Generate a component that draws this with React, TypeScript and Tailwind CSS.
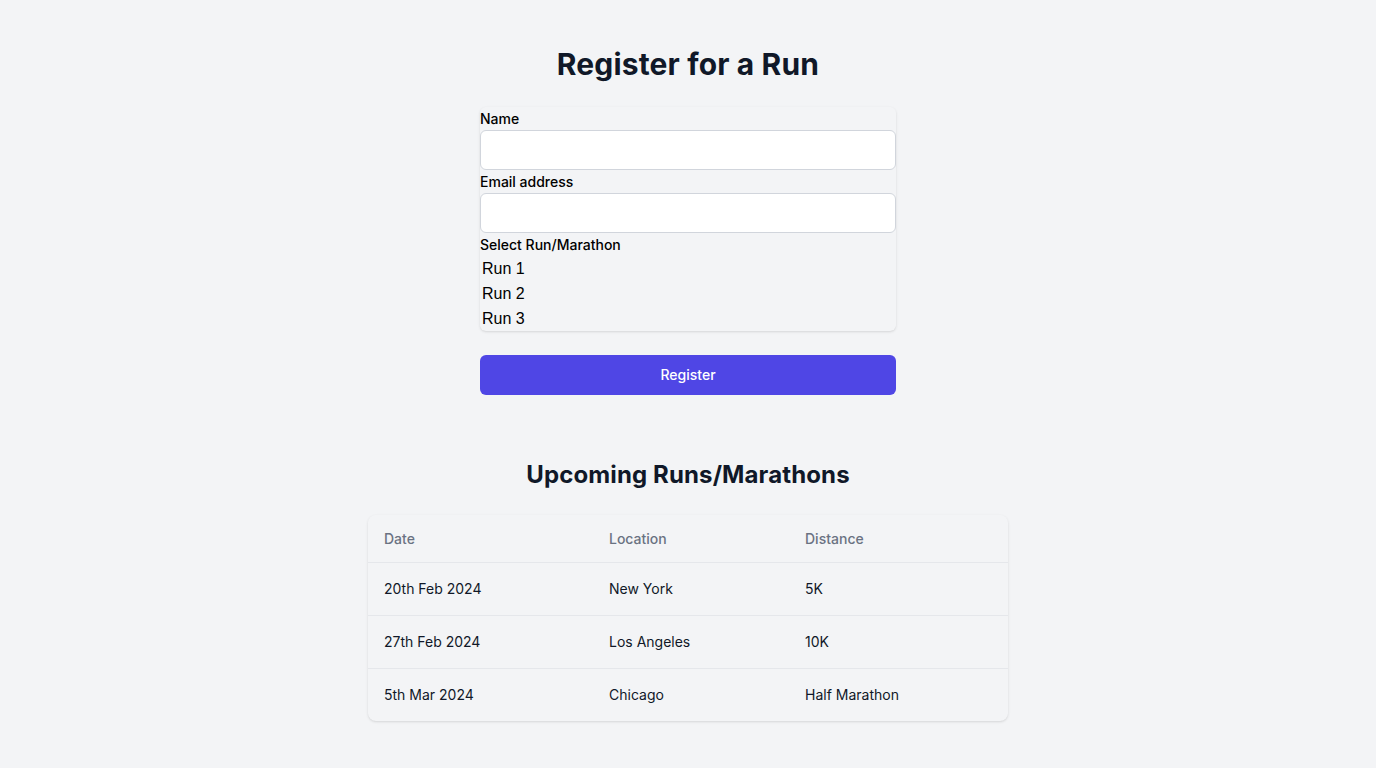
import { useState } from "react";

interface Race {
  date: string;
  location: string;
  distance: string;
}

const races: Race[] = [
  { date: "20th Feb 2024", location: "New York", distance: "5K" },
  { date: "27th Feb 2024", location: "Los Angeles", distance: "10K" },
  { date: "5th Mar 2024", location: "Chicago", distance: "Half Marathon" },
];

const runOptions = ["Run 1", "Run 2", "Run 3"];

const App: React.FC = () => {
  const [name, setName] = useState("");
  const [email, setEmail] = useState("");
  const [selected, setSelected] = useState("");

  return (
    <div
      className="min-h-screen w-full bg-gray-100 pt-[46px] pb-12 flex flex-col items-center"
      style={{ fontFamily: "Inter, 'Liberation Sans', sans-serif" }}
    >
      <h1 className="text-3xl font-bold text-gray-900 text-center tracking-[0.005em]">Register for a Run</h1>

      <form className="mt-[25px] w-[416px]" onSubmit={(e) => e.preventDefault()}>
        <div className="rounded-md shadow-sm">
          <label className="block text-sm font-medium text-black leading-[23px]">Name</label>
          <input
            type="text"
            className="block w-full h-10 px-3 bg-white border border-gray-300 rounded-md text-sm"
            value={name}
            onChange={(e) => setName(e.target.value)}
          />
          <label className="block text-sm font-medium text-black leading-[23px]">Email address</label>
          <input
            type="email"
            className="block w-full h-10 px-3 bg-white border border-gray-300 rounded-md text-sm"
            value={email}
            onChange={(e) => setEmail(e.target.value)}
          />
          <label className="block text-sm font-medium text-black leading-[23px]">Select Run/Marathon</label>
          <div style={{ fontFamily: "'Liberation Sans', Arial, sans-serif" }}>
            {runOptions.map((r) => (
              <div
                key={r}
                className={
                  "px-[2px] h-[25px] leading-[25px] text-base text-black cursor-default " +
                  (selected === r ? "bg-gray-300" : "")
                }
                onClick={() => setSelected(r)}
              >
                {r}
              </div>
            ))}
          </div>
        </div>

        <button
          type="submit"
          className="mt-6 w-full h-10 rounded-md bg-[#4f46e5] text-white text-sm font-medium"
        >
          Register
        </button>
      </form>

      <h2 className="mt-16 text-2xl font-bold text-gray-900 text-center tracking-[0.005em]">Upcoming Runs/Marathons</h2>

      <div className="mt-6 w-[640px] rounded-lg shadow overflow-hidden">
        <table className="w-full text-sm text-left">
          <thead>
            <tr className="border-b border-gray-200">
              <th className="w-[225px] px-4 pt-[13px] pb-[11px] font-medium text-gray-500 h-[47px]">Date</th>
              <th className="w-[196px] px-4 pt-[13px] pb-[11px] font-medium text-gray-500">Location</th>
              <th className="px-4 pt-[13px] pb-[11px] font-medium text-gray-500">Distance</th>
            </tr>
          </thead>
          <tbody>
            {races.map((r, i) => (
              <tr key={r.date} className={i < races.length - 1 ? "border-b border-gray-200" : ""}>
                <td className="px-4 py-4 text-gray-900">{r.date}</td>
                <td className="px-4 py-4 text-gray-900">{r.location}</td>
                <td className="px-4 py-4 text-gray-900">{r.distance}</td>
              </tr>
            ))}
          </tbody>
        </table>
      </div>
    </div>
  );
};

export default App;
